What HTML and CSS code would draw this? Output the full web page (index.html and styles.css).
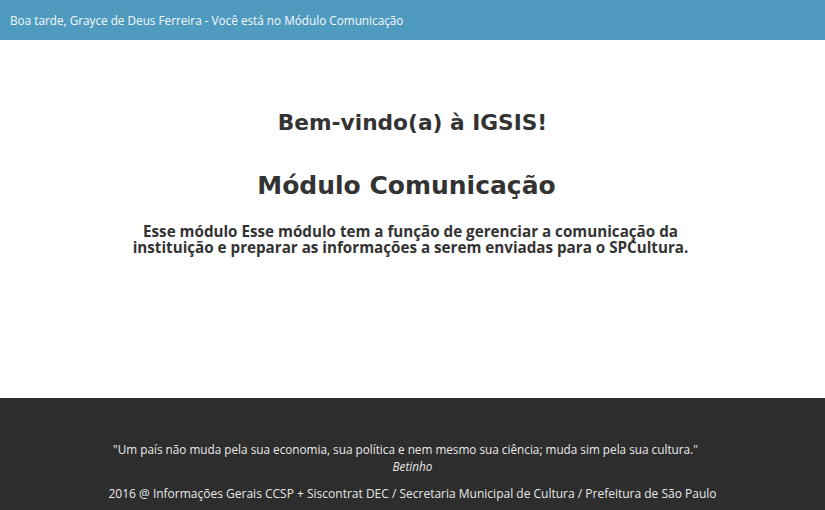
FILE: index.html
```html
<!DOCTYPE html>
<html lang="pt-BR">
<head>
<meta charset="utf-8">
<title>IGSIS</title>
<link rel="stylesheet" href="styles.css">
</head>
<body>
<header class="topbar">Boa tarde, Grayce de Deus Ferreira - Você está no Módulo Comunicação</header>
<main class="content">
  <h2 class="welcome">Bem-vindo(a) à IGSIS!</h2>
  <h1 class="module">Módulo Comunicação</h1>
  <p class="desc">Esse módulo Esse módulo tem a função de gerenciar a comunicação da<br>instituição e preparar as informações a serem enviadas para o SPCultura.</p>
</main>
<footer class="footer">
  <p class="quote">"Um país não muda pela sua economia, sua política e nem mesmo sua ciência; muda sim pela sua cultura."</p>
  <p class="author">Betinho</p>
  <p class="copy">2016 @ Informações Gerais CCSP + Siscontrat DEC / Secretaria Municipal de Cultura / Prefeitura de São Paulo</p>
</footer>
</body>
</html>
```
FILE: styles.css
```css
html, body { margin: 0; padding: 0; }
body {
  width: 825px;
  height: 510px;
  overflow: hidden;
  display: flex;
  flex-direction: column;
  font-family: "Open Sans", "Liberation Sans", sans-serif;
  background: #fff;
}
.topbar {
  height: 40px;
  box-sizing: border-box;
  background: #4f9bbf;
  color: #f4f8fb;
  font-size: 11.75px;
  line-height: 40px;
  padding-left: 10px;
}
.content {
  height: 358px;
  text-align: center;
  color: #333;
  padding-top: 70px;
  box-sizing: border-box;
}
.welcome {
  margin: 0;
  font-family: "DejaVu Sans", sans-serif;
  font-size: 21.7px;
  font-weight: 700;
  line-height: 26px;
}
.module {
  margin: 33px 0 0;
  padding-right: 12px;
  font-family: "DejaVu Sans", sans-serif;
  font-size: 25px;
  font-weight: 700;
  line-height: 34px;
}
.desc {
  margin: 20px 0 0;
  padding-right: 4px;
  font-size: 15.2px;
  font-weight: 700;
  line-height: 16px;
}
.footer {
  flex: 1;
  background: #2d2d2d;
  color: #e8e8e8;
  text-align: center;
  font-size: 11.75px;
  padding-top: 43px;
}
.footer p { margin: 0; line-height: 17px; }
.quote { padding-right: 14px; }
.author { font-style: italic; }
.copy { margin-top: 10px !important; font-size: 12px; }
```
